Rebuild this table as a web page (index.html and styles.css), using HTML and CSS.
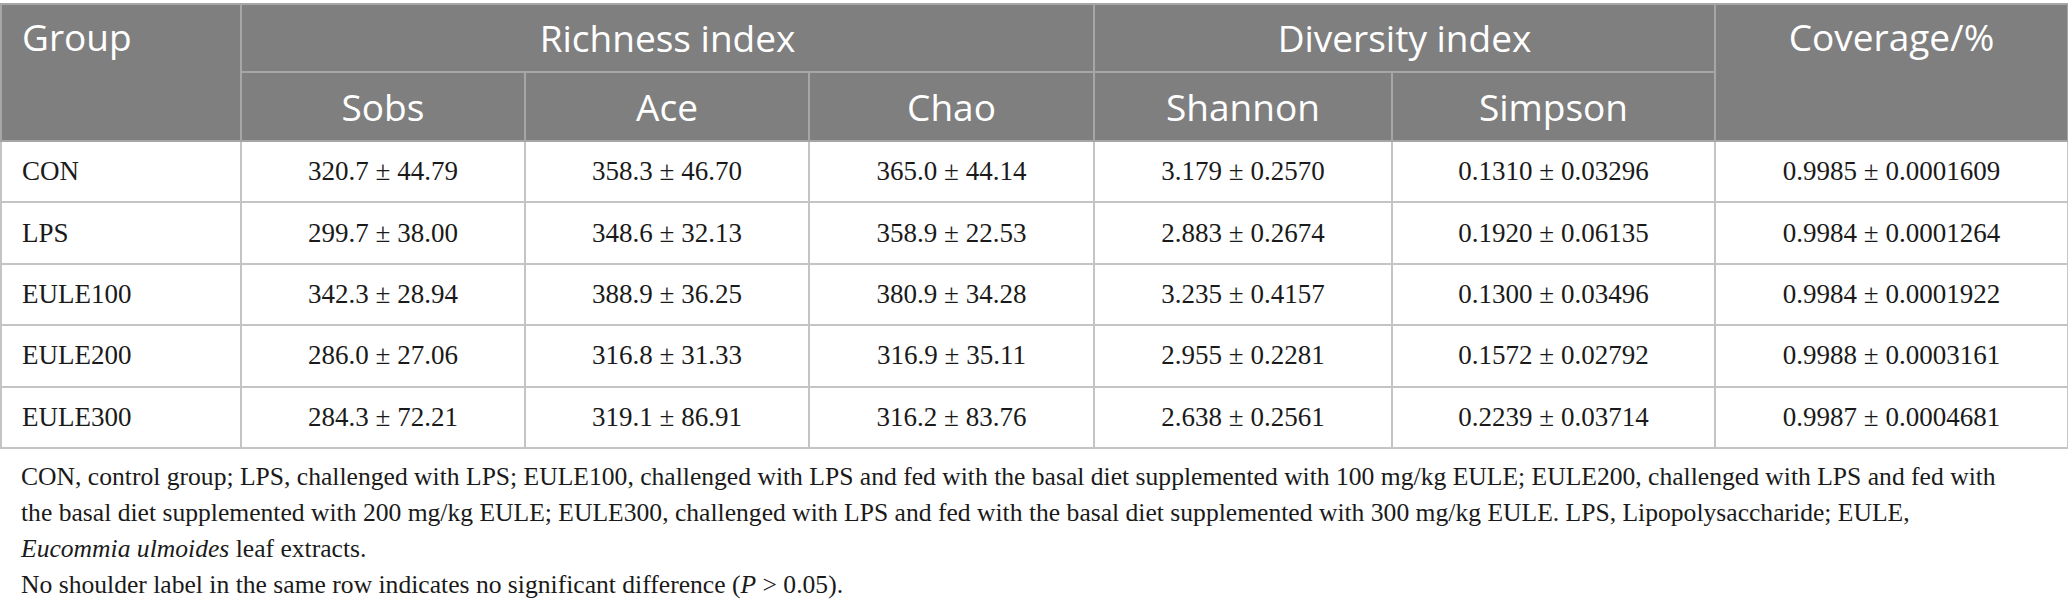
FILE: index.html
```html
<!DOCTYPE html>
<html lang="en">
<head>
<meta charset="utf-8">
<title>Alpha diversity table</title>
<link rel="stylesheet" href="styles.css">
</head>
<body>
<div class="page">
  <table class="data-table">
    <colgroup>
      <col class="c-group">
      <col class="c-sobs">
      <col class="c-ace">
      <col class="c-chao">
      <col class="c-shannon">
      <col class="c-simpson">
      <col class="c-coverage">
    </colgroup>
    <thead>
      <tr class="head-1">
        <th rowspan="2" class="left top">Group</th>
        <th colspan="3">Richness index</th>
        <th colspan="2">Diversity index</th>
        <th rowspan="2" class="top">Coverage/%</th>
      </tr>
      <tr class="head-2">
        <th>Sobs</th>
        <th>Ace</th>
        <th>Chao</th>
        <th>Shannon</th>
        <th>Simpson</th>
      </tr>
    </thead>
    <tbody>
      <tr>
        <td class="left">CON</td>
        <td>320.7 ± 44.79</td>
        <td>358.3 ± 46.70</td>
        <td>365.0 ± 44.14</td>
        <td>3.179 ± 0.2570</td>
        <td>0.1310 ± 0.03296</td>
        <td>0.9985 ± 0.0001609</td>
      </tr>
      <tr>
        <td class="left">LPS</td>
        <td>299.7 ± 38.00</td>
        <td>348.6 ± 32.13</td>
        <td>358.9 ± 22.53</td>
        <td>2.883 ± 0.2674</td>
        <td>0.1920 ± 0.06135</td>
        <td>0.9984 ± 0.0001264</td>
      </tr>
      <tr>
        <td class="left">EULE100</td>
        <td>342.3 ± 28.94</td>
        <td>388.9 ± 36.25</td>
        <td>380.9 ± 34.28</td>
        <td>3.235 ± 0.4157</td>
        <td>0.1300 ± 0.03496</td>
        <td>0.9984 ± 0.0001922</td>
      </tr>
      <tr>
        <td class="left">EULE200</td>
        <td>286.0 ± 27.06</td>
        <td>316.8 ± 31.33</td>
        <td>316.9 ± 35.11</td>
        <td>2.955 ± 0.2281</td>
        <td>0.1572 ± 0.02792</td>
        <td>0.9988 ± 0.0003161</td>
      </tr>
      <tr>
        <td class="left">EULE300</td>
        <td>284.3 ± 72.21</td>
        <td>319.1 ± 86.91</td>
        <td>316.2 ± 83.76</td>
        <td>2.638 ± 0.2561</td>
        <td>0.2239 ± 0.03714</td>
        <td>0.9987 ± 0.0004681</td>
      </tr>
    </tbody>
  </table>
  <div class="notes">
    <p>CON, control group; LPS, challenged with LPS; EULE100, challenged with LPS and fed with the basal diet supplemented with 100 mg/kg EULE; EULE200, challenged with LPS and fed with<br>the basal diet supplemented with 200 mg/kg EULE; EULE300, challenged with LPS and fed with the basal diet supplemented with 300 mg/kg EULE. LPS, Lipopolysaccharide; EULE,<br><em>Eucommia ulmoides</em> leaf extracts.</p>
    <p>No shoulder label in the same row indicates no significant difference (<em>P</em> &gt; 0.05).</p>
  </div>
</div>
</body>
</html>
```

FILE: styles.css
```css
html, body {
  margin: 0;
  padding: 0;
  background: #ffffff;
}

.page {
  width: 2068px;
  padding-top: 3px;
}

.data-table {
  width: 2067px;
  border-collapse: collapse;
  table-layout: fixed;
}

.c-group { width: 240px; }
.c-sobs { width: 284px; }
.c-ace { width: 284px; }
.c-chao { width: 285px; }
.c-shannon { width: 298px; }
.c-simpson { width: 323px; }
.c-coverage { width: 353px; }

.head-1 { height: 68px; }
.head-2 { height: 69px; }
.data-table tbody tr { height: 61.4px; }

.data-table th {
  background: #7f7f7f;
  color: #ffffff;
  font-family: "Open Sans", "Noto Sans", sans-serif;
  font-weight: 400;
  font-size: 37px;
  line-height: 50px;
  text-align: center;
  vertical-align: middle;
  border: 2px solid #a6a6a6;
  padding: 0 20px;
  white-space: nowrap;
}

.data-table th.top {
  vertical-align: top;
  padding-top: 7px;
}

.data-table td {
  font-family: "Liberation Serif", "Times New Roman", serif;
  font-size: 27px;
  color: #1a1a1a;
  text-align: center;
  vertical-align: middle;
  border: 2px solid #c4c4c4;
  padding: 0 20px;
  white-space: nowrap;
}

.data-table .left {
  text-align: left;
}

.notes {
  padding: 10px 0 0 21px;
  font-family: "Liberation Serif", "Times New Roman", serif;
  font-size: 25.6px;
  line-height: 36px;
  color: #1a1a1a;
}

.notes p {
  margin: 0;
}
```
